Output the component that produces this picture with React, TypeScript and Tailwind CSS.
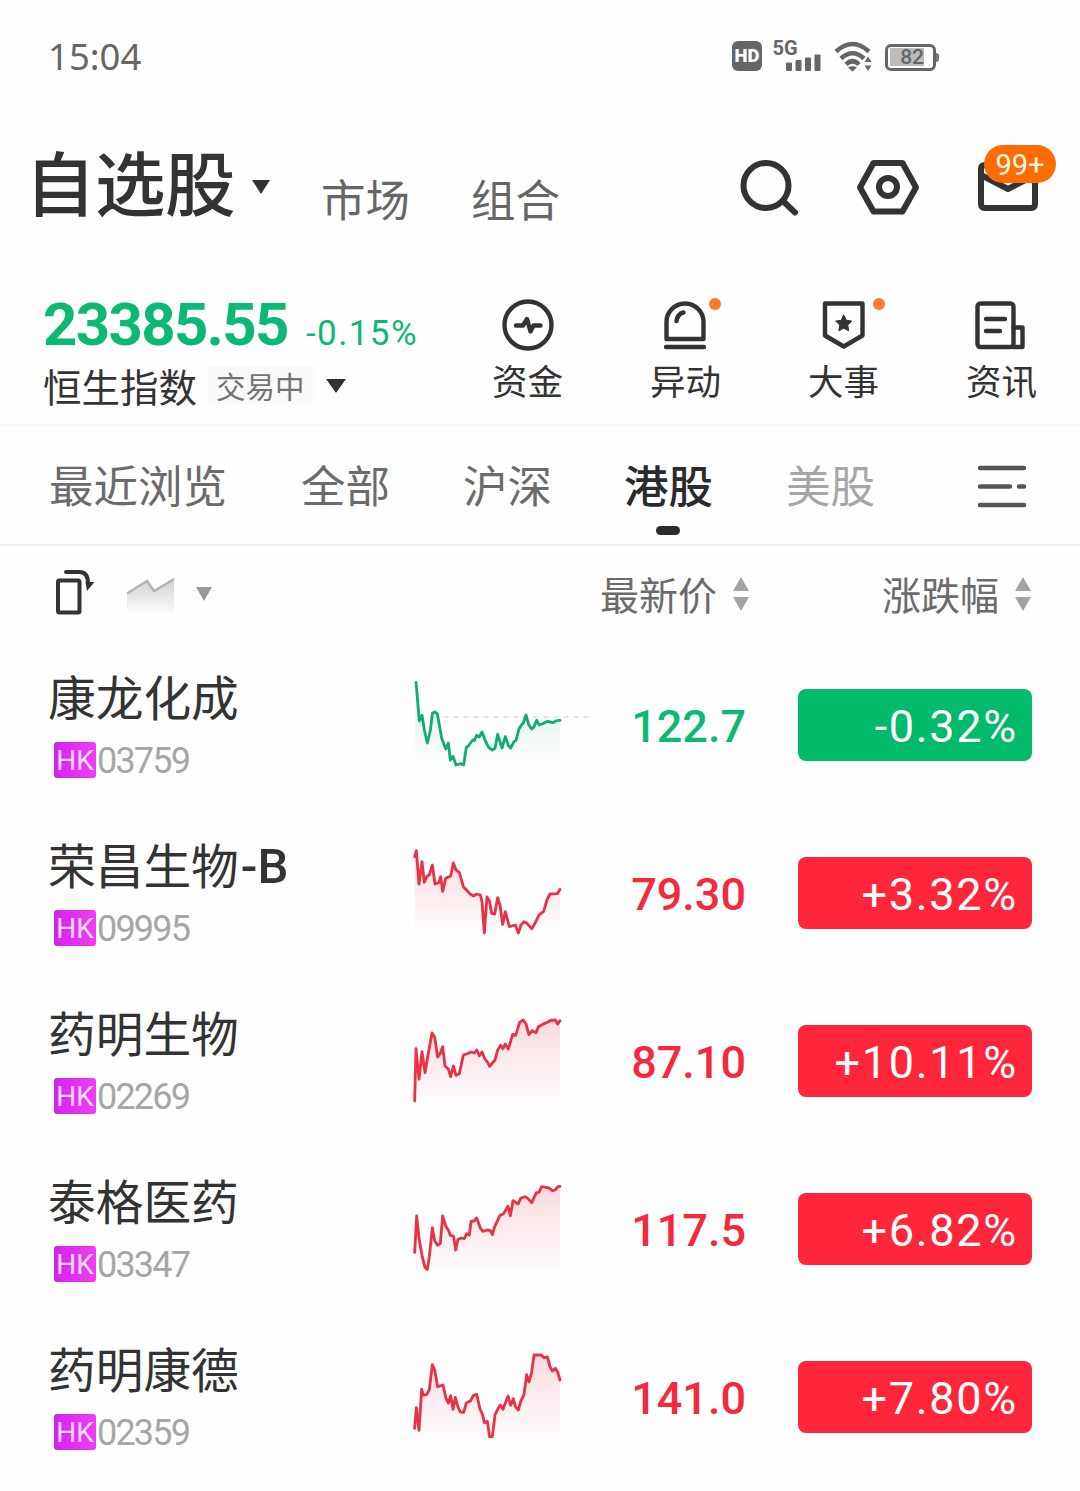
import React from 'react'

interface Stock {
  name: string
  suffix?: string
  code: string
  price: string
  change: string
  shift: number
  points: string
}

interface QuickLink {
  label: string
  dotClass?: string
  icon: React.ReactNode
}

const UP = '#f5293c'
const DOWN = '#0cb974'

const stocks: Stock[] = [
  {
    name: '康龙化成',
    code: '03759',
    price: '122.7',
    change: '-0.32%',
    shift: 54,
    points:
      '48,67 51,100 58,183 66,166 73,210 82,249 91,212 97,160 104,156 112,161 118,195 125,235 137,267 145,249 151,300 159,289 168,315 182,311 191,315 199,262 205,258 218,240 223,242 230,226 238,231 246,216 256,243 266,262 277,270 285,265 293,223 306,264 316,230 325,256 332,264 342,245 348,241 357,207 366,193 370,189 378,165 386,194 395,207 401,202 410,181 418,195 430,190 443,184 458,188 470,182 480,181'
  },
  {
    name: '荣昌生物',
    suffix: '-B',
    code: '09995',
    price: '79.30',
    change: '+3.32%',
    shift: 60,
    points:
      '44,80 49,62 57,162 66,95 73,157 80,140 88,134 97,105 105,162 117,157 122,140 128,184 137,145 152,138 160,99 168,120 178,127 190,170 203,184 211,193 221,198 230,192 241,195 246,215 253,309 261,201 268,212 275,250 284,252 293,203 300,225 308,283 316,245 328,290 346,285 355,309 363,285 372,275 381,280 395,296 406,278 417,255 431,244 441,210 450,192 472,191 480,178'
  },
  {
    name: '药明生物',
    code: '02269',
    price: '87.10',
    change: '+10.11%',
    shift: 66,
    points:
      '44,303 48,146 57,237 66,155 75,218 84,165 96,99 104,112 113,171 121,160 128,140 135,198 145,207 152,230 160,198 168,226 178,221 190,165 205,160 213,156 223,159 230,150 238,167 246,156 254,176 263,187 269,199 285,180 293,150 302,136 309,146 316,132 325,147 338,103 347,106 359,67 370,60 378,72 387,104 397,92 408,98 415,80 426,74 444,66 451,61 466,60 473,72 480,62'
  },
  {
    name: '泰格医药',
    code: '03347',
    price: '117.5',
    change: '+6.82%',
    shift: 72,
    points:
      '44,247 50,138 57,205 66,256 75,292 82,298 88,260 97,173 104,212 113,226 121,220 128,138 137,168 146,182 151,196 161,199 167,240 174,208 185,204 193,206 200,191 208,195 213,154 222,153 230,144 242,176 249,184 262,180 271,182 277,194 284,170 300,136 310,132 324,109 331,137 339,92 354,102 363,84 376,80 385,87 395,98 409,68 417,67 425,50 438,52 447,54 457,62 465,60 474,50 480,49'
  },
  {
    name: '药明康德',
    code: '02359',
    price: '141.0',
    change: '+7.80%',
    shift: 63,
    points:
      '44,280 49,218 57,286 65,163 70,180 80,179 88,164 97,89 104,105 113,155 129,150 138,190 145,204 152,182 159,223 166,187 174,216 181,231 191,232 199,204 212,197 220,182 230,178 240,222 248,240 253,263 262,259 269,305 277,305 285,240 293,223 301,210 309,223 324,183 332,211 340,191 346,215 355,225 362,200 372,178 380,119 387,141 395,112 402,60 424,60 432,68 442,66 450,95 457,108 466,100 473,111 480,135'
  }
]

const tabs = [
  { label: '最近浏览', className: 'ml-[49px] text-[#6b6b6b]' },
  { label: '全部', className: 'ml-[74px] text-[#6b6b6b]' },
  { label: '沪深', className: 'ml-[73px] text-[#6b6b6b]' },
  { label: '港股', className: 'ml-[72px] font-medium text-[#2b2b2b]' },
  { label: '美股', className: 'ml-[73px] text-[#a6a6a6]' }
]

const quickLinks: QuickLink[] = [
  {
    label: '资金',
    icon: (
      <>
        <circle cx="30" cy="29" r="23.5" />
        <path d="M18 29.500h7l4-6.500 3.500 12.500 3-6h7" />
      </>
    )
  },
  {
    label: '异动',
    dotClass: 'right-[15px]',
    icon: (
      <>
        <path d="M10.500 43V26a18.500 18.500 0 0 1 37 0v17Z" />
        <path d="M20.500 25q1-7 7-8.500M10 51h38" />
      </>
    )
  },
  {
    label: '大事',
    dotClass: 'right-[9px]',
    icon: (
      <>
        <path d="M11 7.500h37.500v32L29.750 50.500 11 39.500Z" />
        <path
          d="m29.750 19 2.600 5.200 5.400.9-4 4 .9 5.700-4.900-2.600-4.900 2.600.9-5.700-4-4 5.400-.9Z"
          fill="currentColor"
          strokeWidth="1"
        />
      </>
    )
  },
  {
    label: '资讯',
    icon: (
      <>
        <rect x="5.500" y="7.500" width="36" height="43.500" rx="3" />
        <path d="M41.500 31.500h9V51h-9M14 23h19M14 35h14" />
      </>
    )
  }
]

const StatusBar: React.FC = () => (
  <div className="flex h-[114px] items-center pl-[48px] text-[#666]">
    <span className="mt-[-1px] w-[684px] font-['Noto_Sans'] text-[36.500px] leading-none">15:04</span>
    <span className="mt-[-2px] flex h-[30px] w-[30px] items-center justify-center rounded-md bg-[#666] pt-px font-['Roboto'] text-[18.500px] font-black text-white">
      HD
    </span>
    <svg className="ml-[10px]" width="52" height="40" viewBox="0 0 52 40" fill="currentColor">
      <text x="0.500" y="18" fontFamily="Roboto" fontSize="20" fontWeight="700">
        5G
      </text>
      <rect x="14" y="25.500" width="6" height="8.500" rx="1" />
      <rect x="23.500" y="23" width="6" height="11" rx="1" />
      <rect x="33" y="20.500" width="6" height="13.500" rx="1" />
      <rect x="42.500" y="17.500" width="6" height="16.500" rx="1" />
    </svg>
    <svg className="ml-[10px]" width="40" height="40" viewBox="0 0 40 40" fill="none" stroke="currentColor" strokeWidth="4.500">
      <path d="M2 14.500q16.500-15 33 0" />
      <path d="M7 21.500q11.500-10.500 23 0" />
      <path d="M12 27.500q6.500-6.500 13 0" />
      <path d="m14 30.500 4.500 4 4.500-4q-4.500-2.500-9 0Z" fill="currentColor" stroke="none" />
      <path d="m30.500 25 3.500-5.500 3.500 5.500ZM30.500 28.500l3.500 5.500 3.500-5.500Z" fill="currentColor" stroke="none" />
    </svg>
    <div className="ml-[11px] flex h-[27px] w-[51px] items-center rounded-[6px] border-[3px] border-[#666] pl-[2px]">
      <span className="flex h-[18px] w-[34px] items-center justify-end bg-[#bcbcbc] pt-px font-['Roboto'] text-[21px] leading-none font-medium">
        82
      </span>
    </div>
    <span className="h-[9px] w-[3px] rounded-r bg-[#777]" />
  </div>
)

const NavBar: React.FC = () => (
  <header className="flex h-[146px] items-center text-[#333]">
    <h1 className="mt-[-14px] ml-[25px] w-[213px] text-[70.500px] leading-none font-medium tracking-[-0.5px] whitespace-nowrap">
      自选股
    </h1>
    <svg className="ml-[13px]" width="20" height="16" viewBox="0 0 20 16" fill="currentColor">
      <path d="M1 1h18l-9 14Z" />
    </svg>
    <span className="mt-[22px] ml-[50px] text-[44.500px] leading-none text-[#666]">市场</span>
    <span className="mt-[22px] ml-[61px] text-[44.500px] leading-none text-[#666]">组合</span>
    <svg className="ml-[179px]" width="62" height="64" viewBox="0 0 62 64" fill="none" stroke="currentColor" strokeWidth="6" strokeLinecap="round">
      <circle cx="27" cy="30.500" r="22.500" />
      <path d="m45 47 11 10.500" />
    </svg>
    <svg className="ml-[55px]" width="64" height="64" viewBox="0 0 64 64" fill="none" stroke="currentColor" strokeWidth="6" strokeLinejoin="round">
      <path d="M17.500 8h29L60 32.500 46.500 56.500h-29L4 32.500Z" />
      <circle cx="32" cy="32" r="9" />
    </svg>
    <div className="relative ml-[56px]">
      <svg width="64" height="64" viewBox="0 0 64 64" fill="none" stroke="currentColor" strokeWidth="6" strokeLinejoin="round">
        <path d="M5 14v35q0 4 4 4h46q4 0 4-4V14q0-4-4-4H9q-4 0-4 4Z" />
        <path d="m6 20.500 26 13.500 26-13.500" />
      </svg>
      <span className="absolute -top-[10px] left-[8px] flex h-[38px] w-[72px] items-center justify-center rounded-full bg-[#ff6c00] pt-[4px] font-['Roboto'] text-[29px] text-[#fff6e8]">
        99+
      </span>
    </div>
  </header>
)

const IndexSummary: React.FC = () => (
  <section className="flex h-[166px] border-b-2 border-[#f7f7f7] pt-[30px] pl-[43px] text-[#333]">
    <div className="w-[434px]">
      <div className="flex h-[70px] items-baseline font-['Roboto'] leading-[70px] text-[#0cb974]">
        <span className="w-[263px] text-[60px] font-bold tracking-[-1.7px]">23385.55</span>
        <span className="text-[35px] tracking-[1.400px]">-0.15%</span>
      </div>
      <div className="flex h-[54px] items-center leading-[54px]">
        <span className="mt-[-4px] text-[38.5px]">恒生指数</span>
        <span className="mt-[-4px] ml-[11px] bg-[#f9f9f9] px-[8px] text-[29.500px] leading-[38px] text-[#737373]">
          交易中
        </span>
        <svg className="mt-[-2px] ml-[13px]" width="20" height="14" viewBox="0 0 20 14" fill="currentColor">
          <path d="M0 0h20l-10 14Z" />
        </svg>
      </div>
    </div>
    <div className="flex gap-[57px]">
      {quickLinks.map(link => (
        <div key={link.label} className="relative flex w-[101px] flex-col items-center pt-[6px]">
          <svg
            width="60"
            height="60"
            viewBox="0 0 60 60"
            fill="none"
            stroke="currentColor"
            strokeWidth="4.400"
            strokeLinecap="round"
            strokeLinejoin="round"
          >
            {link.icon}
          </svg>
          {link.dotClass && (
            <span className={`absolute top-[8px] h-3 w-3 rounded-full bg-[#ff7a2e] ${link.dotClass}`} />
          )}
          <span className="mt-[4px] text-[35.500px] leading-[40px]">{link.label}</span>
        </div>
      ))}
    </div>
  </section>
)

const MarketTabs: React.FC = () => (
  <nav className="flex h-[120px] items-center border-b-2 border-[#f0f0f0]">
    {tabs.map(tab => (
      <div key={tab.label} className={`relative mt-[-3px] text-[44.500px] leading-[60px] ${tab.className}`}>
        {tab.label}
        {tab.label === '港股' && (
          <span className="absolute top-[72px] left-[32px] h-[9px] w-[24px] rounded-full bg-[#2b2b2b]" />
        )}
      </div>
    ))}
    <svg className="mt-[3px] ml-[100px]" width="54" height="46" viewBox="0 0 54 46" fill="none" stroke="#555" strokeWidth="4.500" strokeLinecap="round">
      <path d="M5 4h44M5 22.500h30M44 22.500h5M5 41h44" />
    </svg>
  </nav>
)

const SortArrows: React.FC = () => (
  <svg width="18" height="34" viewBox="0 0 18 34" fill="#a3a3a3">
    <path d="m9 0 8 14H1ZM9 34l8-14H1Z" />
  </svg>
)

const ListHeader: React.FC = () => (
  <div className="flex h-[95px] items-center text-[39px] leading-none text-[#6b6b6b]">
    <svg className="mt-[-4px] ml-[53px]" width="44" height="48" viewBox="0 0 44 48" fill="none" stroke="#333" strokeWidth="4">
      <rect x="5" y="12.500" width="21.500" height="32" rx="1.500" />
      <path d="M13 4h13q9 0 9 11" strokeLinecap="round" />
      <path d="M32.500 14h9l-7.500 9Z" fill="#333" stroke="none" />
    </svg>
    <svg className="ml-[29px]" width="50" height="40" viewBox="0 0 50 40" fill="none">
      <defs>
        <linearGradient id="trend" x1="0" y1="0" x2="0" y2="1">
          <stop offset="0" stopColor="#cfcfcf" />
          <stop offset="1" stopColor="#fafafa" />
        </linearGradient>
      </defs>
      <path d="M1 20 21 7l7 10L48 4v34H1Z" fill="url(#trend)" />
      <path d="M1 19.500 21 7l7 10L48 5" stroke="#b5b5b5" strokeWidth="2.500" />
    </svg>
    <svg className="ml-[20px]" width="16" height="14" viewBox="0 0 16 14" fill="#999">
      <path d="M0 0h16L8 14Z" />
    </svg>
    <span className="mt-[-1px] mr-[15px] ml-[388px]">最新价</span>
    <SortArrows />
    <span className="mt-[-1px] mr-[15px] ml-[132px]">涨跌幅</span>
    <SortArrows />
  </div>
)

const Sparkline: React.FC<{ stock: Stock; color: string }> = ({ stock, color }) => {
  const id = `fill-${stock.code}`
  return (
    <svg width="200" height="168" viewBox="0 -3 600 504" fill="none">
      <defs>
        <linearGradient id={id} x1="0" y1="0" x2="0" y2="1">
          <stop offset="0" stopColor={color} stopOpacity="0.18" />
          <stop offset="1" stopColor={color} stopOpacity="0" />
        </linearGradient>
      </defs>
      <g transform={`translate(0 ${stock.shift})`}>
        <path d={`M44,315 L${stock.points} L480,315Z`} fill={`url(#${id})`} />
        {stock.change.startsWith('-') && (
          <path d="M130 171H566" stroke="#dcdcdc" strokeWidth="4" strokeDasharray="16 14" />
        )}
        <polyline points={stock.points} stroke={color} strokeWidth="8.500" strokeLinejoin="round" strokeLinecap="round" />
      </g>
    </svg>
  )
}

const StockRow: React.FC<{ stock: Stock }> = ({ stock }) => {
  const isDown = stock.change.startsWith('-')
  return (
    <li className="flex h-[168px] items-center pl-[48px] font-['Roboto']">
      <div className="w-[352px]">
        <div className="mt-[-7px] flex h-[64px] items-center font-['Noto_Sans_CJK_SC'] text-[47.700px] leading-[64px] text-[#333]">
          {stock.name}
          {stock.suffix && (
            <span className="ml-[2px] pt-[4px] font-['Roboto'] text-[49px] leading-none font-medium">{stock.suffix}</span>
          )}
        </div>
        <div className="mt-[13px] flex items-center pl-[6px] leading-[36px]">
          <span className="flex h-[36px] w-[42px] items-center justify-center rounded-[3px] bg-linear-to-r from-[#d321ee] to-[#f03cf4] pt-[2px] text-[28px] text-[#fbdcff]">
            HK
          </span>
          <span className="ml-px pt-[2px] text-[36px] tracking-[-1.800px] text-[#a6a6a6]">{stock.code}</span>
        </div>
      </div>
      <Sparkline stock={stock} color={isDown ? '#12ac72' : '#e83347'} />
      <span
        className="w-[146px] pt-[3px] text-right text-[45px] font-medium"
        style={{ color: isDown ? DOWN : UP }}
      >
        {stock.price}
      </span>
      <span
        className="ml-[52px] flex h-[72px] w-[234px] items-center justify-end rounded-lg pt-[3px] pr-[14px] text-[45px] tracking-[1.700px] text-white"
        style={{ backgroundColor: isDown ? '#02ba6c' : '#ff263b' }}
      >
        {stock.change}
      </span>
    </li>
  )
}

const App: React.FC = () => (
  <div className="h-[1491px] w-[1080px] overflow-hidden bg-[#fefefe] font-['Noto_Sans_CJK_SC',sans-serif]">
    <StatusBar />
    <NavBar />
    <IndexSummary />
    <MarketTabs />
    <ListHeader />
    <ul>
      {stocks.map(stock => (
        <StockRow key={stock.code} stock={stock} />
      ))}
    </ul>
  </div>
)

export default App
